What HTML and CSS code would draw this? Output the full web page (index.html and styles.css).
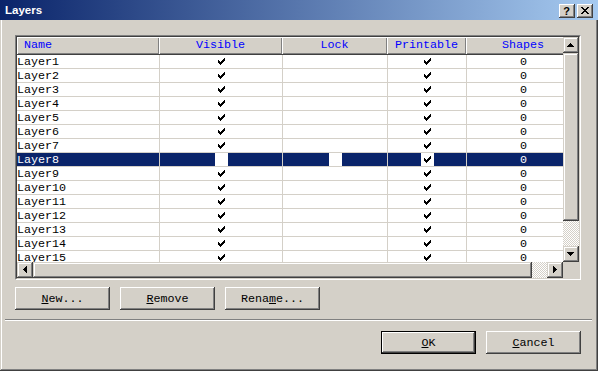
FILE: index.html
```html
<!DOCTYPE html>
<html lang="en">

<head>
    <meta charset="UTF-8">
    <title>Layers</title>
    <link rel="stylesheet" href="styles.css">
</head>

<body>
    <svg class="defs" width="0" height="0">
        <symbol id="chk" viewBox="0 0 13 13">
            <path shape-rendering="crispEdges" d="M9 3h1v1h-1z M8 4h2v1h-2z M3 5h1v1h-1z M7 5h3v1h-3z M3 6h2v1h-2z M6 6h3v1h-3z M3 7h5v1h-5z M4 8h3v1h-3z M5 9h1v1h-1z" />
        </symbol>
    </svg>

    <div class="dialog">
        <div class="titlebar">
            <span class="title">Layers</span>
            <div class="capbtns">
                <span class="capbtn help">?</span>
                <span class="capbtn">
                    <svg width="8" height="7" viewBox="0 0 8 7"><path shape-rendering="crispEdges" d="M0 0h2v1h-2z M6 0h2v1h-2z M1 1h2v1h-2z M5 1h2v1h-2z M2 2h4v1h-4z M3 3h2v1h-2z M2 4h4v1h-4z M1 5h2v1h-2z M5 5h2v1h-2z M0 6h2v1h-2z M6 6h2v1h-2z" /></svg>
                </span>
            </div>
        </div>

        <div class="content">
            <div class="listbox">
                <div class="listinner">
                    <div class="view">
                        <div class="hd">
                            <span class="left">Name</span>
                            <span>Visible</span>
                            <span>Lock</span>
                            <span>Printable</span>
                            <span>Shapes</span>
                        </div>
                        <div class="rows" id="rows"></div>
                    </div>

                    <div class="vscroll">
                        <span class="sbtn"><svg width="7" height="4" viewBox="0 0 7 4"><path d="M3 0h1v1h1v1h1v1h1v1h-7v-1h1v-1h1v-1h1z" /></svg></span>
                        <span class="thumb vthumb"></span>
                        <span class="track"></span>
                        <span class="sbtn"><svg width="7" height="4" viewBox="0 0 7 4"><path d="M0 0h7v1h-1v1h-1v1h-1v1h-1v-1h-1v-1h-1v-1h-1z" /></svg></span>
                    </div>

                    <div class="hscroll">
                        <span class="sbtn"><svg width="4" height="7" viewBox="0 0 4 7"><path d="M3 0h1v7h-1v-1h-1v-1h-1v-1h-1v-1h1v-1h1v-1h1z" /></svg></span>
                        <span class="thumb hthumb"></span>
                        <span class="track"></span>
                        <span class="sbtn"><svg width="4" height="7" viewBox="0 0 4 7"><path d="M0 0h1v1h1v1h1v1h1v1h-1v1h-1v1h-1v1h-1z" /></svg></span>
                    </div>

                    <div class="corner"></div>
                </div>
            </div>

            <div class="btnrow">
                <span class="btn"><u>N</u>ew...</span>
                <span class="btn"><u>R</u>emove</span>
                <span class="btn">Rena<u>m</u>e...</span>
            </div>

            <div class="sep"></div>

            <div class="btnrow end">
                <span class="btn default"><u>O</u>K</span>
                <span class="btn"><u>C</u>ancel</span>
            </div>
        </div>
    </div>

    <script>
        // layer rows: name, visible, lock, printable, shapes
        var layers = [];
        for (var i = 1; i <= 15; i++) {
            layers.push({ name: 'Layer' + i, visible: i !== 8, lock: false, printable: true, shapes: 0 });
        }

        function box(on) {
            return '<span class="box">' + (on ? '<svg width="13" height="13"><use href="#chk"/></svg>' : '') + '</span>';
        }

        var html = '';
        layers.forEach(function (l, n) {
            html += '<div class="row' + (n === 7 ? ' sel' : '') + '">' +
                '<span class="name">' + l.name + '</span>' +
                '<span>' + box(l.visible) + '</span>' +
                '<span>' + box(l.lock) + '</span>' +
                '<span>' + box(l.printable) + '</span>' +
                '<span class="num">' + l.shapes + '</span>' +
                '</div>';
        });
        document.getElementById('rows').innerHTML = html;
    </script>
</body>

</html>
```

FILE: styles.css
```css
body {
    margin: 0;
    font-family: "Liberation Mono", monospace;
    font-size: 11.7px;
    color: black;
}

.defs {
    position: absolute;
}

.dialog {
    width: 598px;
    height: 371px;
    background-color: #d4d0c8;
    box-shadow: inset -1px -1px #404040, inset 1px 1px #d4d0c8, inset -2px -2px #808080, inset 2px 2px #fff;
    overflow: hidden;
}

.titlebar {
    height: 20px;
    background: linear-gradient(to right, #0a246a, #a6caf0);
    display: flex;
    align-items: flex-start;
    justify-content: space-between;
}

.title {
    font-family: "Liberation Sans", sans-serif;
    font-weight: bold;
    font-size: 11.5px;
    color: white;
    padding: 3px 0 0 5px;
    line-height: 14px;
}

.capbtns {
    display: flex;
    gap: 2px;
    margin: 4px 5px 0 0;
}

.capbtn {
    width: 16px;
    height: 14px;
    box-sizing: border-box;
    background-color: #d4d0c8;
    box-shadow: inset -1px -1px #404040, inset 1px 1px #fff, inset -2px -2px #808080;
    display: flex;
    align-items: center;
    justify-content: center;
}

.capbtn svg {
    margin: 0 1px 1px 0;
}

.help {
    font-family: "Liberation Sans", sans-serif;
    font-weight: bold;
    font-size: 11px;
    line-height: 14px;
    padding-right: 1px;
}

.content {
    padding: 15px 17px 0 15px;
}

/* list view */

.listbox {
    width: 566px;
    border: 2px solid;
    border-color: #808080 #fff #fff #808080;
    box-sizing: border-box;
}

.listinner {
    border: 1px solid;
    border-color: #404040 #d4d0c8 #d4d0c8 #404040;
    margin: -1px;
    display: grid;
    grid-template-columns: 546px 16px;
    grid-template-rows: 225px 16px;
    background-color: white;
}

.view {
    overflow: hidden;
}

.hd,
.row {
    display: grid;
    grid-template-columns: 142px 123px 105px 79px 114px;
    width: 563px;
}

.hd {
    height: 17px;
    background-color: #d4d0c8;
}

.hd span {
    color: #0000ff;
    text-align: center;
    line-height: 17px;
    box-shadow: inset 1px 1px #fff, inset -1px -1px #808080;
    border-bottom: 1px solid #404040;
}

.hd .left {
    text-align: left;
    padding-left: 7px;
}

.row {
    height: 14px;
    border-top: 1px solid #d4d0c8;
    box-sizing: border-box;
    line-height: 15px;
}

.row span {
    border-left: 1px solid #d4d0c8;
    display: flex;
    justify-content: center;
    height: 13px;
}

.row .name {
    border-left: none;
    justify-content: flex-start;
}

.row .box {
    border: none;
    width: 13px;
    height: 13px;
    background-color: white;
}

.sel {
    background-color: #0a246a;
    color: white;
}

/* scrollbars */

.vscroll {
    display: flex;
    flex-direction: column;
}

.hscroll {
    display: flex;
}

.sbtn,
.thumb {
    background-color: #d4d0c8;
    box-shadow: inset -1px -1px #404040, inset 1px 1px #d4d0c8, inset -2px -2px #808080, inset 2px 2px #fff;
}

.sbtn {
    width: 16px;
    height: 16px;
    flex: none;
    display: flex;
    align-items: center;
    justify-content: center;
}

.sbtn svg {
    margin: 0 1px 1px 0;
}

.vthumb {
    height: 168px;
}

.hthumb {
    width: 499px;
}

.track {
    flex: 1;
    background: repeating-conic-gradient(#fff 0 25%, #d4d0c8 0 50%) 0 0 / 2px 2px;
}

.corner {
    background-color: #d4d0c8;
}

/* buttons */

.btnrow {
    display: flex;
    gap: 10px;
    margin-top: 7px;
}

.btnrow.end {
    justify-content: flex-end;
    margin-top: 10px;
}

.btn {
    width: 95px;
    height: 23px;
    box-sizing: border-box;
    background-color: #d4d0c8;
    box-shadow: inset -1px -1px #404040, inset 1px 1px #fff, inset -2px -2px #808080, inset 2px 2px #d4d0c8;
    text-align: center;
    line-height: 24px;
}

.btn.default {
    border: 1px solid black;
    line-height: 22px;
}

.sep {
    height: 0;
    border-top: 1px solid #808080;
    border-bottom: 1px solid #fff;
    margin: 9px -11px 0 -10px;
}
```
